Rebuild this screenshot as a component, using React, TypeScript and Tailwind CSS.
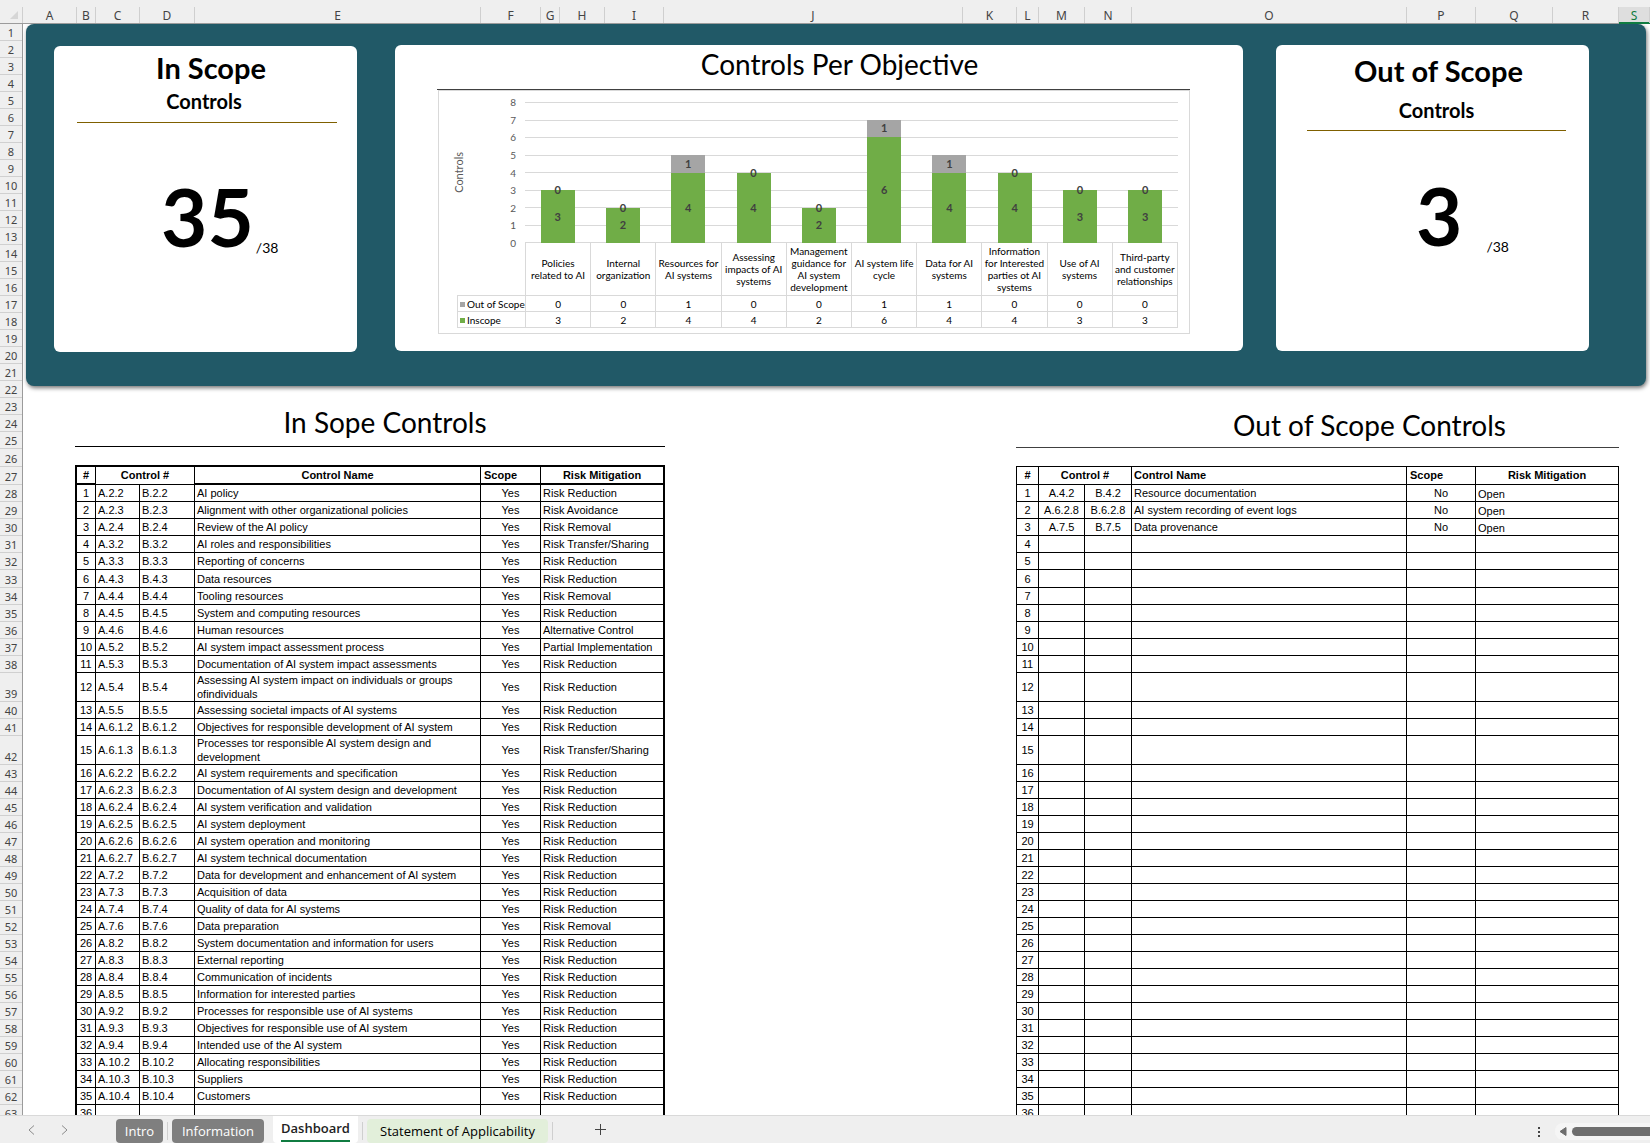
import React, { ReactElement } from "react";
import clsx from "clsx";

const COLUMNS = [
  { name: "A", width: "w-[54px]" },
  { name: "B", width: "w-[19px]" },
  { name: "C", width: "w-[44px]" },
  { name: "D", width: "w-[55px]" },
  { name: "E", width: "w-[286px]" },
  { name: "F", width: "w-[60px]" },
  { name: "G", width: "w-[19px]" },
  { name: "H", width: "w-[45px]" },
  { name: "I", width: "w-[59px]" },
  { name: "J", width: "flex-1" },
  { name: "K", width: "w-[54px]" },
  { name: "L", width: "w-[22px]" },
  { name: "M", width: "w-[46px]" },
  { name: "N", width: "w-[47px]" },
  { name: "O", width: "w-[275px]" },
  { name: "P", width: "w-[69px]" },
  { name: "Q", width: "w-[77px]" },
  { name: "R", width: "w-[66px]" },
  { name: "S", width: "w-[31px]" },
];

const OBJECTIVES = [
  { name: "Policies related to AI", inscope: 3, out: 0 },
  { name: "Internal organization", inscope: 2, out: 0 },
  { name: "Resources for AI systems", inscope: 4, out: 1 },
  { name: "Assessing impacts of AI systems", inscope: 4, out: 0 },
  { name: "Management guidance for AI system development", inscope: 2, out: 0 },
  { name: "AI system life cycle", inscope: 6, out: 1 },
  { name: "Data for AI systems", inscope: 4, out: 1 },
  { name: "Information for Interested parties ot AI systems", inscope: 4, out: 0 },
  { name: "Use of AI systems", inscope: 3, out: 0 },
  { name: "Third-party and customer relationships", inscope: 3, out: 0 },
];

const AXIS_MAX = 8;
const TICKS = [8, 7, 6, 5, 4, 3, 2, 1, 0];

// [control number without its letter, name, risk mitigation]
const IN_SCOPE = [
  ["2.2", "AI policy", "Risk Reduction"],
  ["2.3", "Alignment with other organizational policies", "Risk Avoidance"],
  ["2.4", "Review of the AI policy", "Risk Removal"],
  ["3.2", "AI roles and responsibilities", "Risk Transfer/Sharing"],
  ["3.3", "Reporting of concerns", "Risk Reduction"],
  ["4.3", "Data resources", "Risk Reduction"],
  ["4.4", "Tooling resources", "Risk Removal"],
  ["4.5", "System and computing resources", "Risk Reduction"],
  ["4.6", "Human resources", "Alternative Control"],
  ["5.2", "AI system impact assessment process", "Partial Implementation"],
  ["5.3", "Documentation of AI system impact assessments", "Risk Reduction"],
  ["5.4", "Assessing AI system impact on individuals or groups ofindividuals", "Risk Reduction"],
  ["5.5", "Assessing societal impacts of AI systems", "Risk Reduction"],
  ["6.1.2", "Objectives for responsible development of AI system", "Risk Reduction"],
  ["6.1.3", "Processes tor responsible AI system design and development", "Risk Transfer/Sharing"],
  ["6.2.2", "AI system requirements and specification", "Risk Reduction"],
  ["6.2.3", "Documentation of AI system design and development", "Risk Reduction"],
  ["6.2.4", "AI system verification and validation", "Risk Reduction"],
  ["6.2.5", "AI system deployment", "Risk Reduction"],
  ["6.2.6", "AI system operation and monitoring", "Risk Reduction"],
  ["6.2.7", "AI system technical documentation", "Risk Reduction"],
  ["7.2", "Data for development and enhancement of AI system", "Risk Reduction"],
  ["7.3", "Acquisition of data", "Risk Reduction"],
  ["7.4", "Quality of data for AI systems", "Risk Reduction"],
  ["7.6", "Data preparation", "Risk Removal"],
  ["8.2", "System documentation and information for users", "Risk Reduction"],
  ["8.3", "External reporting", "Risk Reduction"],
  ["8.4", "Communication of incidents", "Risk Reduction"],
  ["8.5", "Information for interested parties", "Risk Reduction"],
  ["9.2", "Processes for responsible use of AI systems", "Risk Reduction"],
  ["9.3", "Objectives for responsible use of AI system", "Risk Reduction"],
  ["9.4", "Intended use of the AI system", "Risk Reduction"],
  ["10.2", "Allocating responsibilities", "Risk Reduction"],
  ["10.3", "Suppliers", "Risk Reduction"],
  ["10.4", "Customers", "Risk Reduction"],
];

const OUT_OF_SCOPE = [
  ["4.2", "Resource documentation", "Open"],
  ["6.2.8", "AI system recording of event logs", "Open"],
  ["7.5", "Data provenance", "Open"],
];

const TABLE_ROWS = Array.from({ length: 36 }, (_, i) => i);
const SHEET_ROWS = Array.from({ length: 63 }, (_, i) => i + 1);

function rowHeight(row: number) {
  if (row === 39 || row === 42) return "h-[29px]";
  if (row === 26 || row === 27 || row === 33) return "h-[18px]";
  return "h-[17px]";
}

function App(): ReactElement {
  return (
    <div className="flex h-screen flex-col overflow-hidden bg-white font-['Lato',sans-serif] text-black">
      <ColumnHeader />
      <main className="flex min-h-0 flex-1 overflow-hidden">
        <RowHeader />
        <div className="min-w-0 flex-1">
          <Summary />
          <div className="flex items-start justify-between pr-[31px] pl-[52px]">
            <section className="pt-[17px]">
              <h2 className="border-b border-black pb-[5px] pl-[30px] text-center text-[28px] leading-[38px]">
                In Sope Controls
              </h2>
              <div className="pt-[18px]">
                <InScopeTable />
              </div>
            </section>
            <section className="pt-5">
              <h2 className="border-b border-[#404040] pb-[3px] pl-[104px] text-center text-[28px] leading-[38px]">
                Out of Scope Controls
              </h2>
              <div className="pt-[18px]">
                <OutOfScopeTable />
              </div>
            </section>
          </div>
        </div>
      </main>
      <SheetTabs />
    </div>
  );
}

function ColumnHeader() {
  return (
    <header className="flex h-6 shrink-0 items-end border-b border-[#9b9b9b] bg-[#efefef] font-['Noto_Sans',sans-serif] text-[12px] leading-[18px] text-[#444]">
      <div className="flex h-4 w-[23px] justify-end border-r border-[#cfcfcf] pt-1 pr-1">
        <svg className="h-2 w-2" viewBox="0 0 8 8" aria-hidden="true">
          <path d="M8 0v8H0z" fill="#d6d6d6" />
        </svg>
      </div>
      {COLUMNS.map((col) => (
        <div
          key={col.name}
          className={clsx(
            "h-4 border-r border-[#cfcfcf] text-center",
            col.width,
            col.name === "S" && "bg-[#dedede] text-[#107c41] shadow-[inset_0_-1px_#107c41,0_1px_#107c41]"
          )}
        >
          {col.name}
        </div>
      ))}
    </header>
  );
}

function RowHeader() {
  return (
    <div className="w-[23px] shrink-0 border-r border-[#9b9b9b] bg-[#efefef] font-['Noto_Sans',sans-serif] text-[11px] leading-[14px] text-[#444]">
      {SHEET_ROWS.map((row) => (
        <div
          key={row}
          className={clsx(
            "flex items-end justify-center border-b border-[#d0d0d0]",
            rowHeight(row)
          )}
        >
          {row}
        </div>
      ))}
    </div>
  );
}

function Summary() {
  return (
    <section className="mr-1 ml-[3px] flex h-[362px] items-start rounded-lg bg-[#215967] pt-[21px] pr-[57px] pl-7 shadow-[1px_2px_4px_rgba(0,0,0,0.55)]">
      {/* in scope */}
      <div className="mt-px mr-[38px] h-[306px] w-[303px] rounded-md bg-white pt-1 pr-5 pl-[23px]">
        <h2 className="pl-2 text-center text-[29px] leading-9 font-bold">In Scope</h2>
        <h3 className="pr-[6px] text-center text-[20px] leading-[30px] font-bold">Controls</h3>
        <div className="mt-[6px] border-b border-[#7f6000]" />
        <div className="flex items-end gap-[2px] pt-[43px] pl-[84px]">
          <span className="text-[80px] leading-[100px] font-bold">35</span>
          <span className="pb-2 text-[14px] leading-5">/38</span>
        </div>
      </div>
      {/* chart */}
      <div className="h-[306px] min-w-0 flex-1 rounded-md bg-white pr-[53px] pl-[42px]">
        <h2 className="border-b border-[#404040] pb-[6px] pl-[52px] text-center text-[28px] leading-[38px]">
          Controls Per Objective
        </h2>
        <Chart />
      </div>
      {/* out of scope */}
      <div className="ml-[33px] h-[306px] w-[313px] rounded-md bg-white pt-2 pr-[23px] pl-[31px]">
        <h2 className="pl-1 text-center text-[29px] leading-9 font-bold">Out of Scope</h2>
        <h3 className="pt-[6px] text-center text-[20px] leading-[30px] font-bold">Controls</h3>
        <div className="mt-[5px] border-b border-[#7f6000]" />
        <div className="flex items-end gap-6 pt-[34px] pl-[109px]">
          <span className="text-[80px] leading-[100px] font-bold">3</span>
          <span className="pb-2 text-[14px] leading-5">/38</span>
        </div>
      </div>
    </section>
  );
}

function Chart() {
  return (
    <div className="ml-px h-[244px] border border-[#d9d9d9] pr-[11px] pl-[18px] text-[10px] leading-3">
      <div className="flex pt-[11px]">
        <div className="flex w-[68px] justify-between pr-[9px]">
          <div className="-ml-1 rotate-180 self-center text-[11px] text-[#595959] [writing-mode:vertical-rl]">
            Controls
          </div>
          <div className="-my-[6px] flex flex-col justify-between text-[#595959]">
            {TICKS.map((tick) => (
              <span key={tick}>{tick}</span>
            ))}
          </div>
        </div>
        <div className="relative h-[141px] flex-1">
          <div className="flex h-full flex-col justify-between">
            {TICKS.map((tick) => (
              <div key={tick} className="h-px bg-[#d9d9d9]" />
            ))}
          </div>
          {/* bars over the grid lines */}
          <div className="absolute inset-0 flex items-end text-[11px] font-bold text-[#404040]">
            {OBJECTIVES.map((o) => (
              <div key={o.name} className="flex h-full flex-1 flex-col items-center justify-end">
                <div
                  className="flex w-[34px] items-center justify-center bg-[#a5a5a5]"
                  style={{ height: `${(o.out / AXIS_MAX) * 100}%` }}
                >
                  <span className="z-10">{o.out}</span>
                </div>
                <div
                  className="flex w-[34px] items-center justify-center bg-[#70ad47]"
                  style={{ height: `${(o.inscope / AXIS_MAX) * 100}%` }}
                >
                  {o.inscope}
                </div>
              </div>
            ))}
          </div>
        </div>
      </div>
      <table className="w-full table-fixed border-separate border-spacing-0 text-center">
        <colgroup>
          <col className="w-[69px]" />
        </colgroup>
        <thead>
          <tr className="h-[53px]">
            <td className="border-r border-b border-[#d9d9d9]" />
            {OBJECTIVES.map((o) => (
              <th
                key={o.name}
                scope="col"
                className="border-r border-b border-[#d9d9d9] p-0 align-middle font-normal"
              >
                {o.name}
              </th>
            ))}
          </tr>
        </thead>
        <tbody>
          <tr className="h-4">
            <th
              scope="row"
              className="border-r border-b border-l border-[#d9d9d9] p-0 text-left font-normal whitespace-nowrap"
            >
              <span className="mr-[2px] ml-[2px] inline-block h-[5px] w-[5px] bg-[#a5a5a5] align-middle" />
              Out of Scope
            </th>
            {OBJECTIVES.map((o) => (
              <td key={o.name} className="border-r border-b border-[#d9d9d9] p-0">
                {o.out}
              </td>
            ))}
          </tr>
          <tr className="h-4">
            <th
              scope="row"
              className="border-r border-b border-l border-[#d9d9d9] p-0 text-left font-normal whitespace-nowrap"
            >
              <span className="mr-[2px] ml-[2px] inline-block h-[5px] w-[5px] bg-[#70ad47] align-middle" />
              Inscope
            </th>
            {OBJECTIVES.map((o) => (
              <td key={o.name} className="border-r border-b border-[#d9d9d9] p-0">
                {o.inscope}
              </td>
            ))}
          </tr>
        </tbody>
      </table>
    </div>
  );
}

const cell = "border-r border-b border-black p-0";
const headCell = "border-r border-b border-black p-0 pb-px";

function InScopeTable() {
  return (
    <table className="w-[590px] table-fixed border-separate border-spacing-0 border-x-2 border-t-2 border-black font-['Liberation_Sans',sans-serif] text-[11px] leading-[14px]">
      <colgroup>
        <col className="w-[19px]" />
        <col className="w-[44px]" />
        <col className="w-[55px]" />
        <col className="w-[286px]" />
        <col className="w-[60px]" />
        <col />
      </colgroup>
      <thead>
        <tr className="h-[18px]">
          <th className="border-r border-b-2 border-black p-0">#</th>
          <th colSpan={2} className={headCell}>
            Control #
          </th>
          <th className="border-r border-b-2 border-black p-0">Control Name</th>
          <th className="border-r border-b-2 border-black p-0 pl-[3px] text-left">Scope</th>
          <th className="border-b-2 border-black p-0">Risk Mitigation</th>
        </tr>
      </thead>
      <tbody>
        {TABLE_ROWS.map((i) => {
          const control = IN_SCOPE[i];
          return (
            <tr key={i} className={rowHeight(i + 28)}>
              <td className={clsx(cell, "text-center")}>{i + 1}</td>
              <td className={clsx(cell, "pl-[2px]")}>{control && `A.${control[0]}`}</td>
              <td className={clsx(cell, "pl-[2px]")}>{control && `B.${control[0]}`}</td>
              <td className={clsx(cell, "pr-3 pl-[2px]")}>{control && control[1]}</td>
              <td className={clsx(cell, "text-center")}>{control && "Yes"}</td>
              <td className="border-b border-black p-0 pl-[2px]">{control && control[2]}</td>
            </tr>
          );
        })}
      </tbody>
    </table>
  );
}

function OutOfScopeTable() {
  return (
    <table className="w-[603px] table-fixed border-separate border-spacing-0 border-t border-l border-black font-['Liberation_Sans',sans-serif] text-[11px] leading-[14px]">
      <colgroup>
        <col className="w-[22px]" />
        <col className="w-[46px]" />
        <col className="w-[47px]" />
        <col className="w-[275px]" />
        <col className="w-[69px]" />
        <col />
      </colgroup>
      <thead>
        <tr className="h-[18px]">
          <th className={headCell}>#</th>
          <th colSpan={2} className={headCell}>
            Control #
          </th>
          <th className={clsx(headCell, "pl-[2px] text-left")}>Control Name</th>
          <th className={clsx(headCell, "pl-[3px] text-left")}>Scope</th>
          <th className={headCell}>Risk Mitigation</th>
        </tr>
      </thead>
      <tbody>
        {TABLE_ROWS.map((i) => {
          const control = OUT_OF_SCOPE[i];
          return (
            <tr key={i} className={rowHeight(i + 28)}>
              <td className={clsx(cell, "text-center")}>{i + 1}</td>
              <td className={clsx(cell, "text-center")}>{control && `A.${control[0]}`}</td>
              <td className={clsx(cell, "text-center")}>{control && `B.${control[0]}`}</td>
              <td className={clsx(cell, "pl-[2px]")}>{control && control[1]}</td>
              <td className={clsx(cell, "text-center")}>{control && "No"}</td>
              <td className={clsx(cell, "pl-[2px] align-bottom")}>{control && control[2]}</td>
            </tr>
          );
        })}
      </tbody>
    </table>
  );
}

function SheetTabs() {
  return (
    <footer className="flex h-7 shrink-0 border-t border-[#d9d9d9] bg-[#efefef] font-['Open_Sans',sans-serif] text-[13px] leading-6">
      <div className="flex w-[116px] items-center gap-6 pl-7 text-[#8a8a8a]">
        <button aria-label="Previous sheet">
          <svg className="h-[10px] w-2" viewBox="0 0 8 10" fill="none" stroke="currentColor">
            <path d="M6 0.5L1 5l5 4.5" />
          </svg>
        </button>
        <button aria-label="Next sheet">
          <svg className="h-[10px] w-2" viewBox="0 0 8 10" fill="none" stroke="currentColor">
            <path d="M2 0.5L7 5 2 9.5" />
          </svg>
        </button>
      </div>
      <nav className="flex items-start">
        <button className="mt-[3px] h-6 w-[47px] rounded-[4px] bg-[#7f7f7f] text-white">Intro</button>
        <Separator />
        <button className="mt-[3px] h-6 w-[92px] rounded-[4px] bg-[#7f7f7f] text-white">
          Information
        </button>
        <div className="w-[9px]" />
        <button className="h-[27px] w-[85px] rounded-b-[4px] bg-white px-2 font-semibold text-[#222]">
          <span className="block border-b-2 border-[#107c41] leading-[23px]">Dashboard</span>
        </button>
        <Separator />
        <button className="mt-[3px] h-6 w-[181px] rounded-[4px] bg-[#e2efda] text-black">
          Statement of Applicability
        </button>
        <Separator />
      </nav>
      <button aria-label="New sheet" className="ml-[38px] self-center text-[#444]">
        <svg className="h-[11px] w-[11px]" viewBox="0 0 11 11" stroke="currentColor">
          <path d="M5.5 0v11M0 5.5h11" />
        </svg>
      </button>
      <div className="ml-auto flex w-[112px] items-center pt-1">
        <div className="flex w-[17px] flex-col gap-[2px]">
          <span className="h-[2px] w-[2px] bg-[#444]" />
          <span className="h-[2px] w-[2px] bg-[#444]" />
          <span className="h-[2px] w-[2px] bg-[#444]" />
        </div>
        <div className="flex h-[17px] flex-1 items-center gap-[5px] rounded-l-lg bg-[#f5f5f5] pl-1">
          <svg className="h-[9px] w-2" viewBox="0 0 8 9" aria-hidden="true">
            <path d="M7 0.5v8L1 4.5z" fill="#6e6e6e" stroke="#6e6e6e" strokeLinejoin="round" />
          </svg>
          <div className="h-[9px] flex-1 rounded-l-full bg-[#6e6e6e]" />
        </div>
      </div>
    </footer>
  );
}

function Separator() {
  return <div className="mx-1 mt-[6px] h-[18px] w-px bg-[#cfcfcf]" />;
}

export default App;
